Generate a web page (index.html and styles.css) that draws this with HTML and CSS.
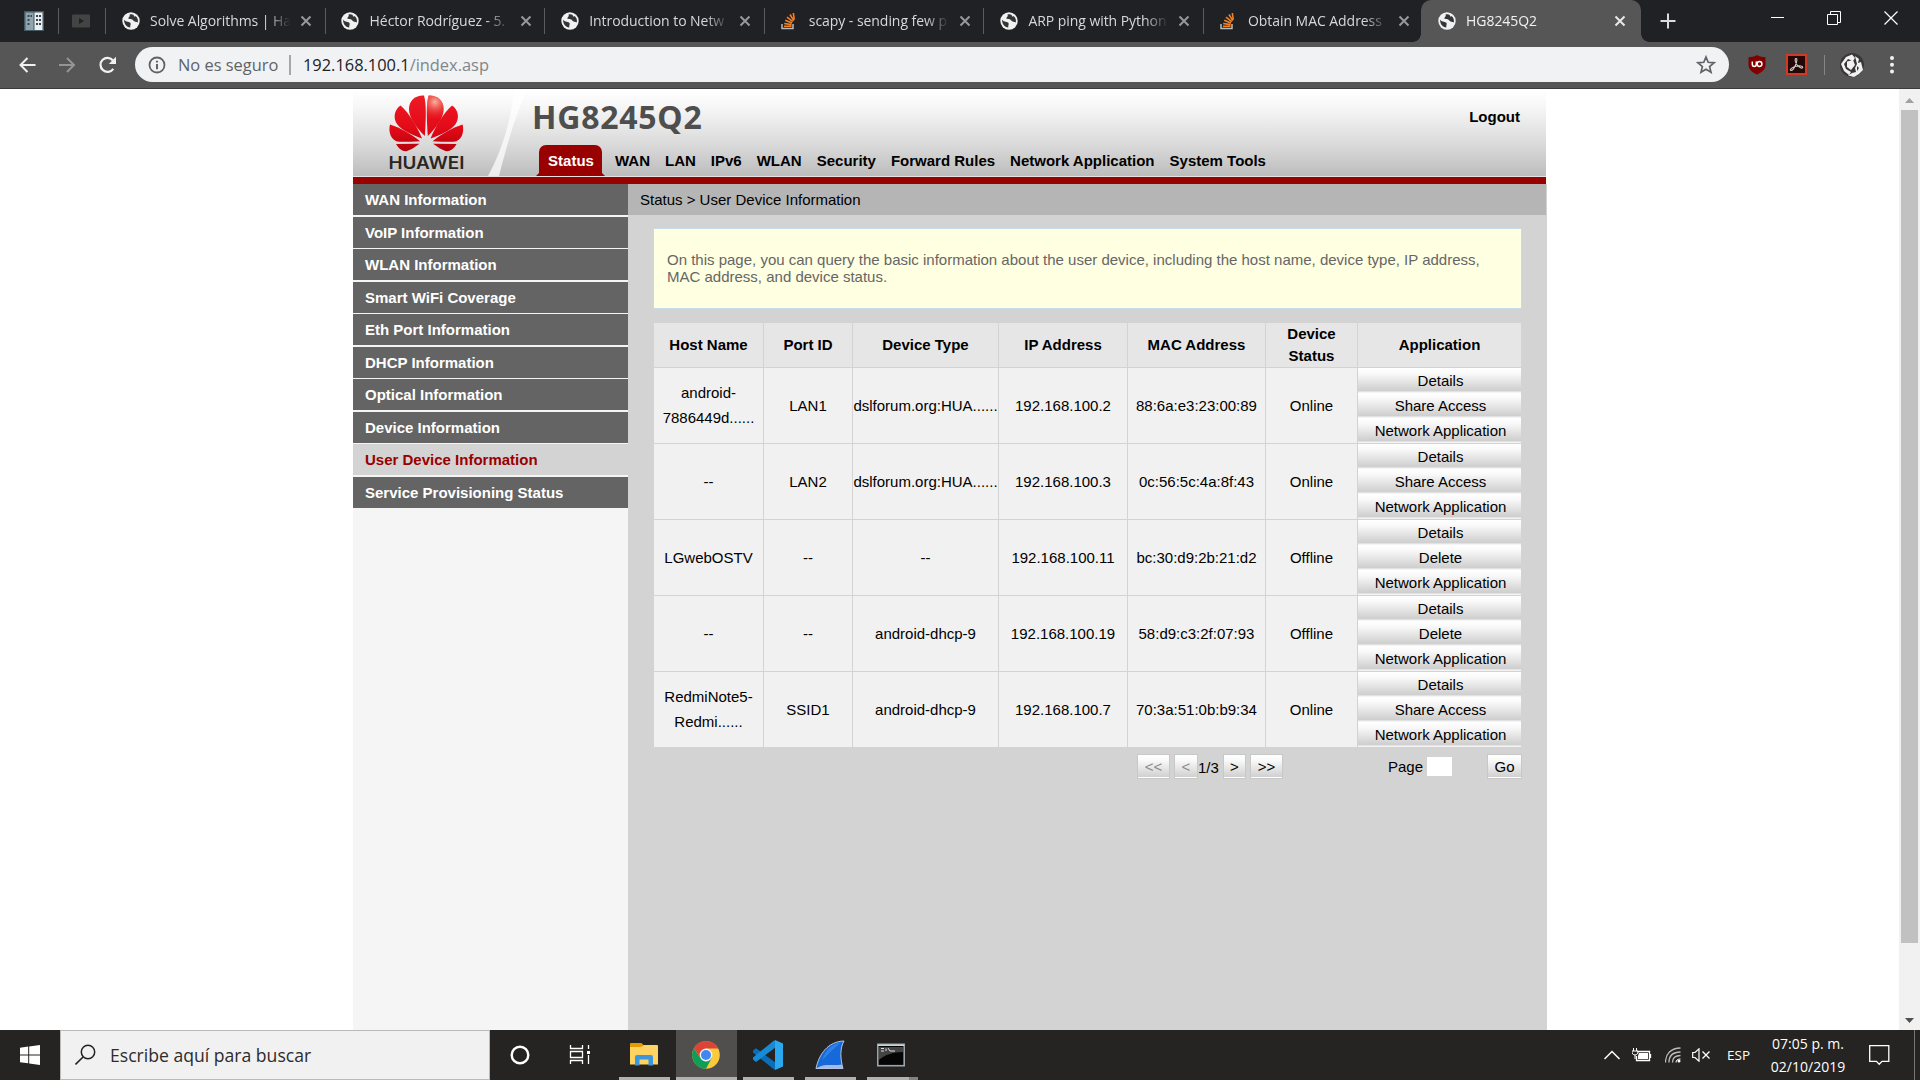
FILE: index.html
```html
<!DOCTYPE html>
<html lang="es">
<head>
<meta charset="utf-8">
<title>HG8245Q2</title>
<link rel="stylesheet" href="styles.css">
</head>
<body>
<svg class="defs" aria-hidden="true">
  <symbol id="globe" viewBox="0 0 18 18"><circle cx="9" cy="9" r="8.700" fill="#f1f1f1"/><path d="M2 7.500C3 10 6.500 9.300 8 10.500C9.500 11.800 8 13 8.300 15.500C4.500 15.200 2 12 2 7.500ZM7.500 2.500C8.500 4 6.800 5 6.300 6.200C6.800 7.600 10.500 6.600 11.300 8.400C12 10 14.500 9.200 15.800 10.400C16.300 8 15.500 5.500 13.500 4C12.500 5.500 11.500 3.800 11.800 2.900C10.500 2.200 9 2.200 7.500 2.500Z" fill="#333538"/></symbol>
  <symbol id="stack" viewBox="0 0 18 18"><path d="M2 12V16.500H13V12" fill="none" stroke="#bcbbbb" stroke-width="1.500"/><path d="M4 14.200H11.500M4.200 11.500L11.600 12.600M5.200 8.300L12 11M7 5.200L12.800 9.600M10 2.500L13.800 8.600M13.300 1L14.300 7.500" stroke="#f48024" stroke-width="1.600"/></symbol>
  <symbol id="x" viewBox="0 0 12 12"><path d="M1.500 1.500L10.500 10.500M10.500 1.500L1.500 10.500" stroke="currentColor" stroke-width="2"/></symbol>
</svg>

<header class="tabs">
  <div class="pin pin--first"><svg width="20" height="20" viewBox="0 0 20 20"><path d="M0 0H20V20H0Z" fill="#455a64"/><path d="M1.500 1.500H9.500V19H1.500Z" fill="#90a4ae"/><path d="M10.500 1.500H18.500V19H10.500Z" fill="#eceff1"/><path d="M3.500 4H5.500V6H3.500ZM6.500 4H8V6H6.500ZM3.500 8H5.500V10H3.500ZM3.500 12H5.500V14H3.500ZM12 4H14V6H12ZM15 4H17V6H15ZM12 8H14V10H12ZM15 8H17V10H15ZM12 12H14V14H12ZM15 12H17V14H15Z" fill="#37474f"/></svg></div>
  <div class="pin pin--second"><svg width="18" height="14" viewBox="0 0 18 14"><rect width="18" height="13" y=".5" rx="1" fill="#444"/><path d="M7 4L12 7L7 10Z" fill="#202124"/></svg></div>
  <div class="tab"><svg class="tab__icon"><use href="#globe"/></svg><span class="tab__title">Solve Algorithms | Ha</span><svg class="tab__close"><use href="#x"/></svg></div>
  <div class="tab"><svg class="tab__icon"><use href="#globe"/></svg><span class="tab__title">Héctor Rodríguez - 5.</span><svg class="tab__close"><use href="#x"/></svg></div>
  <div class="tab"><svg class="tab__icon"><use href="#globe"/></svg><span class="tab__title">Introduction to Netw</span><svg class="tab__close"><use href="#x"/></svg></div>
  <div class="tab"><svg class="tab__icon"><use href="#stack"/></svg><span class="tab__title">scapy - sending few p</span><svg class="tab__close"><use href="#x"/></svg></div>
  <div class="tab"><svg class="tab__icon"><use href="#globe"/></svg><span class="tab__title">ARP ping with Python</span><svg class="tab__close"><use href="#x"/></svg></div>
  <div class="tab tab--last"><svg class="tab__icon"><use href="#stack"/></svg><span class="tab__title">Obtain MAC Address</span><svg class="tab__close"><use href="#x"/></svg></div>
  <div class="tab tab--active"><svg class="tab__icon"><use href="#globe"/></svg><span class="tab__title">HG8245Q2</span><svg class="tab__close"><use href="#x"/></svg></div>
  <svg class="tabs__new" width="16" height="16"><path d="M8 .5V15.500M.5 8H15.500" stroke="#dadce0" stroke-width="2"/></svg>
  <div class="wincontrols">
    <svg width="14" height="14"><path d="M1 6.500H14" stroke="#fff"/></svg>
    <svg width="14" height="14"><path d="M.5 3.500H10.500V13.500H.5ZM3.500 3V.5H13.500V11.500H11" fill="none" stroke="#fff"/></svg>
    <svg width="14" height="14"><path d="M.5 .5L13.500 13.500M13.500 .5L.5 13.500" stroke="#fff" stroke-width="1.200"/></svg>
  </div>
</header>

<div class="toolbar">
  <svg class="toolbar__nav" width="18" height="18"><path d="M17.500 9H3M9.500 2L2.500 9L9.500 16" fill="none" stroke="#f1f1f1" stroke-width="2"/></svg>
  <svg class="toolbar__nav" width="18" height="18"><path d="M1 9H15.500M9 2L16 9L9 16" fill="none" stroke="#959595" stroke-width="2"/></svg>
  <svg class="toolbar__nav" width="19" height="18"><path d="M15.300 12.800A7 7 0 1 1 15 4.500" fill="none" stroke="#f1f1f1" stroke-width="2.200"/><path d="M18 .8V8H10.800Z" fill="#f1f1f1"/></svg>
  <div class="omnibox">
    <svg width="18" height="18"><circle cx="9" cy="9" r="7.500" fill="none" stroke="#5f6368" stroke-width="1.800"/><path d="M9 8V13.200M9 4.800V6.500" stroke="#5f6368" stroke-width="2"/></svg>
    <span class="omnibox__warn">No es seguro</span>
    <span class="omnibox__sep"></span>
    <span class="omnibox__url">192.168.100.1<i>/index.asp</i></span>
    <svg class="omnibox__star" width="20" height="20"><path d="M10 2L12.200 7.300L18 7.800L13.600 11.600L15 17.300L10 14.200L5 17.300L6.400 11.600L2 7.800L7.800 7.300Z" fill="none" stroke="#5f6368" stroke-width="1.700"/></svg>
  </div>
  <svg class="ext-shield" width="18" height="20"><path d="M9 0C12 2 15 2 17.500 2.200V10C17.500 15 13 17.500 9 19.500C5 17.500 .5 15 .5 10V2.200C3 2 6 2 9 0Z" fill="#800000"/><path d="M4.300 6.500V9Q4.300 11.500 6.300 11.500Q8.300 11.500 8.300 9V6.500" fill="none" stroke="#fff" stroke-width="1.500"/><circle cx="11.500" cy="9" r="2.400" fill="none" stroke="#fff" stroke-width="1.500"/></svg>
  <svg class="ext-pdf" width="21" height="21"><rect x="1" y="1" width="19" height="19" fill="#230806" stroke="#d13826" stroke-width="2"/><path d="M9.800 4.500C11.500 4 11 7.500 9.500 11C8.300 14 6 16.800 4.500 16.300C3.500 15.300 7 12.800 10 12.200C13.500 11.500 17 12 16.800 13.600C16 15 12.500 13 10.800 10.500C9.300 8 8.600 5.500 9.800 4.500Z" fill="none" stroke="#ccc" stroke-width="1.100"/></svg>
  <span class="toolbar__sep"></span>
  <svg class="avatar" width="26" height="26"><circle cx="13" cy="13" r="12" fill="#3a3636"/><path d="M2 12L7 5L13 2.500L16 6L14 9L9 7L5 12L7 17L12 20L10 23L5 19ZM8 9.500L14 8L16 13L12 18L8 15ZM16 4L20 7L19 11L22 10L24 18L20 22L15 25L9 23.500L13 21L17 20L16 16L18 12Z" fill="#f1f1f1"/><path d="M18 14L20 16L18 19Z" fill="#3a3636"/></svg>
  <svg class="toolbar__menu" width="6" height="20"><circle cx="3" cy="3" r="2" fill="#f1f1f1"/><circle cx="3" cy="9.800" r="2" fill="#f1f1f1"/><circle cx="3" cy="16.600" r="2" fill="#f1f1f1"/></svg>
</div>

<div class="viewport">
  <div class="site">
    <div class="banner">
      <svg class="banner__brand" width="181" height="87">
        <defs>
          <linearGradient id="petal" x1="0" y1="6" x2="0" y2="62" gradientUnits="userSpaceOnUse"><stop offset="0" stop-color="#ee1c25"/><stop offset=".6" stop-color="#e20a17"/><stop offset="1" stop-color="#b5000b"/></linearGradient>
          <radialGradient id="glow" cx="82" cy="13" r="18" gradientUnits="userSpaceOnUse"><stop offset="0" stop-color="#f6b59c"/><stop offset="1" stop-color="#ee1c25" stop-opacity="0"/></radialGradient>
          <g id="wing"><path d="M71.800 47C73 30 73.500 15 71 6.500C63 6 56 11 56 20C56 29 63 38 71.800 47Z"/><path d="M69 49.500C64 37 56 24 47.500 16.500C41 21 40 29 44 35C49 42 60 46 69 49.500Z"/><path d="M67 52.200C58 45 48 39 37 35.500C35 43 38 52 46 52.800C53 53 60 52.500 67 52.200Z"/><path d="M66.500 54.800L43 55C46 60 50 63 54 62C58 61 62 58 66.500 54.800Z"/></g>
        </defs>
        <path d="M161 0C158 35 147 65 135 87H146C152 65 160 30 175 0Z" fill="#fff" opacity=".72"/>
        <use href="#wing" fill="url(#petal)"/>
        <use href="#wing" fill="url(#petal)" transform="matrix(-1 0 0 1 146.600 0)"/>
        <path d="M74.800 47C73.600 30 73.100 15 75.600 6.500C83.600 6 90.600 11 90.600 20C90.600 29 83.600 38 74.800 47Z" fill="url(#glow)"/>
        <text class="banner__name" x="35.500" y="80" textLength="76" lengthAdjust="spacingAndGlyphs">HUAWEI</text>
      </svg>
      <div class="banner__main">
        <div class="banner__top"><h1>HG8245Q2</h1><a class="banner__logout">Logout</a></div>
        <nav class="menu">
          <a class="menu__item menu__item--on">Status</a><a class="menu__item">WAN</a><a class="menu__item">LAN</a><a class="menu__item">IPv6</a><a class="menu__item">WLAN</a><a class="menu__item">Security</a><a class="menu__item">Forward Rules</a><a class="menu__item">Network Application</a><a class="menu__item">System Tools</a>
        </nav>
      </div>
    </div>
    <div class="columns">
      <aside class="side">
        <a>WAN Information</a><a>VoIP Information</a><a>WLAN Information</a><a>Smart WiFi Coverage</a><a>Eth Port Information</a><a>DHCP Information</a><a>Optical Information</a><a>Device Information</a><a class="side__on">User Device Information</a><a>Service Provisioning Status</a>
      </aside>
      <main class="main">
        <div class="crumbs">Status &gt; User Device Information</div>
        <div class="main__body">
          <p class="note">On this page, you can query the basic information about the user device, including the host name, device type, IP address,<br>MAC address, and device status.</p>
          <table class="devices">
            <colgroup><col class="c1"><col class="c2"><col class="c3"><col class="c4"><col class="c5"><col class="c6"><col class="c7"></colgroup>
            <thead><tr><th>Host Name</th><th>Port ID</th><th>Device Type</th><th>IP Address</th><th>MAC Address</th><th>Device Status</th><th>Application</th></tr></thead>
            <tbody>
            <tr><td class="devices__wrap">android-<br>7886449d......</td><td>LAN1</td><td>dslforum.org:HUA......</td><td>192.168.100.2</td><td>88:6a:e3:23:00:89</td><td>Online</td><td><a class="act">Details</a><a class="act">Share Access</a><a class="act">Network Application</a></td></tr>
            <tr><td>--</td><td>LAN2</td><td>dslforum.org:HUA......</td><td>192.168.100.3</td><td>0c:56:5c:4a:8f:43</td><td>Online</td><td><a class="act">Details</a><a class="act">Share Access</a><a class="act">Network Application</a></td></tr>
            <tr><td>LGwebOSTV</td><td>--</td><td>--</td><td>192.168.100.11</td><td>bc:30:d9:2b:21:d2</td><td>Offline</td><td><a class="act">Details</a><a class="act">Delete</a><a class="act">Network Application</a></td></tr>
            <tr><td>--</td><td>--</td><td>android-dhcp-9</td><td>192.168.100.19</td><td>58:d9:c3:2f:07:93</td><td>Offline</td><td><a class="act">Details</a><a class="act">Delete</a><a class="act">Network Application</a></td></tr>
            <tr><td class="devices__wrap">RedmiNote5-<br>Redmi......</td><td>SSID1</td><td>android-dhcp-9</td><td>192.168.100.7</td><td>70:3a:51:0b:b9:34</td><td>Online</td><td><a class="act">Details</a><a class="act">Share Access</a><a class="act">Network Application</a></td></tr>
            </tbody>
          </table>
          <div class="pager">
            <span class="pager__btn pager__btn--wide pager__btn--off">&lt;&lt;</span><span class="pager__btn pager__btn--off pager__prev">&lt;</span><span class="pager__count">1/3</span><span class="pager__btn pager__next">&gt;</span><span class="pager__btn pager__btn--wide">&gt;&gt;</span>
            <span class="pager__label">Page</span><span class="pager__input"></span><span class="pager__btn pager__go">Go</span>
          </div>
        </div>
      </main>
    </div>
  </div>
  <div class="scroll">
    <svg width="21" height="21"><path d="M6 14L10.500 9L15 14Z" fill="#a0a0a0"/></svg>
    <span class="scroll__thumb"></span>
    <svg class="scroll__down" width="21" height="21"><path d="M6 9L10.500 14L15 9Z" fill="#505050"/></svg>
  </div>
</div>

<footer class="taskbar">
  <div class="start"><svg width="20" height="20"><path d="M0 2.800L8.200 1.600V9.400H0ZM9.200 1.500L20 0V9.400H9.200ZM0 10.400H8.200V18.300L0 17.200ZM9.200 10.400H20V20L9.200 18.500Z" fill="#fff"/></svg></div>
  <div class="search"><svg width="22" height="22"><circle cx="13" cy="8" r="6.700" fill="none" stroke="#222" stroke-width="1.500"/><path d="M8.300 12.800L.5 20.500" stroke="#222" stroke-width="1.600"/></svg><span>Escribe aquí para buscar</span></div>
  <div class="app app--cortana"><svg width="22" height="22"><circle cx="11" cy="11" r="8.300" fill="none" stroke="#fff" stroke-width="2.400"/></svg></div>
  <div class="app app--view"><svg width="22" height="20"><path d="M1.500 0V3.500H13.500V0M1.500 19V15.500H13.500V19M1.500 6.500H13.500V12.500H1.500ZM19.500 0V4M19.500 10V19" fill="none" stroke="#fff" stroke-width="1.300"/><path d="M18 6H21V9H18Z" fill="#fff"/></svg></div>
  <div class="app app--run app--files"><svg width="28" height="26"><path d="M0 2Q0 1 1 1H11.500L14 3.500L12 6H0Z" fill="#e39b00"/><path d="M0 5H11L14 3H27Q28 3 28 4V22.500H0Z" fill="#ffd361"/><path d="M5 23.500V15Q5 13 7 13H21Q23 13 23 15V23.500H18.500V17.500H9.500V23.500Z" fill="#3c96dc"/></svg></div>
  <div class="app app--run app--chrome"><svg width="28" height="28" viewBox="-14 -14 28 28"><circle r="13.800" fill="#fbc93c"/><path d="M0 0L-12 -6.900A13.800 13.800 0 0 1 12 -6.900L12 -6.500H0Z" fill="#db4437"/><path d="M-5.600 3.300L-12 -6.900A13.800 13.800 0 0 0 0 13.800L5.600 3.300L0 0Z" fill="#0f9d58"/><path d="M-12 -6.900L-5.600 3.300L0 -6.500Z" fill="#db4437"/><circle r="6.400" fill="#f1f1f1"/><circle r="5" fill="#4285f4"/></svg></div>
  <div class="app app--run app--code"><svg width="30" height="30"><path d="M0 10.500L3 8.200L23 23V29L21 29.500L0 12.500Z" fill="#0a6fbb"/><path d="M0 19.500L3 22L23 7V1L21 .5L0 17.500Z" fill="#168bd7"/><path d="M22 0L30 3.500V26.500L22 30Z" fill="#2ba8ee"/></svg></div>
  <div class="app app--run app--shark"><svg width="30" height="30"><path d="M1 28.500C4 14 13 1.500 29 1C25 8 25 18 28 28.500Z" fill="#1669d9" stroke="#b7c6da" stroke-width="1"/><path d="M2 28C9 23 17 26 27 24.500L28 28.500Z" fill="#a5b9e6"/><path d="M7 20C11 9 18 4 26 2.500C20 7 15 13 7 20Z" fill="#3080ea"/></svg></div>
  <div class="app app--run app--cmd"><svg width="28" height="24"><rect x=".8" y="1.300" width="26.400" height="21.400" fill="#050505" stroke="#9da5aa" stroke-width="1.600"/><path d="M1 1.500H27V3H1Z" fill="#cbd5da"/><path d="M2 4H26V9C16 9 7 12 2 17Z" fill="#444"/><path d="M4 5.500H7M4 8H7M9 5.500V8M11 5L13 8H18" stroke="#ddd" fill="none"/></svg></div>
  <div class="tray">
    <svg class="tray__up" width="16" height="10"><path d="M.5 9L8 1.500L15.500 9" fill="none" stroke="#fff" stroke-width="1.500"/></svg>
    <svg class="tray__bat" width="20" height="14"><path d="M5 3.500H17.500V12.500H4.500V8M18.500 6V10" fill="none" stroke="#fff" stroke-width="1.300"/><path d="M7 5H16V11H6V8Z" fill="#fff"/><path d="M1.500 0V3M4.500 0V3M0 3H6V5Q5 7 3 7Q1 7 0 5ZM3 7V11" fill="none" stroke="#fff"/></svg>
    <svg class="tray__wifi" width="16" height="16"><path d="M.5 15.500C.5 7 6 1 15.500 1M4 15.500C4 9 8 5 15.500 5M7.500 15.500C7.500 11 10 8.500 15.500 8.500" fill="none" stroke="#bbb" stroke-width="1.300"/><path d="M11 15.500Q11 12 15.500 12" fill="none" stroke="#fff"/><circle cx="14" cy="14" r="1.500" fill="#fff"/></svg>
    <svg class="tray__vol" width="19" height="14"><path d="M.7 4.500H3L7 .8V13.200L3 9.500H.7Z" fill="none" stroke="#fff" stroke-width="1.200"/><path d="M10.500 3.500L17.500 10.500M17.500 3.500L10.500 10.500" stroke="#fff" stroke-width="1.300"/></svg>
    <span class="tray__lang">ESP</span>
    <div class="tray__clock"><span>07:05 p. m.</span><span>02/10/2019</span></div>
    <svg class="tray__note" width="21" height="21"><path d="M.7 .7H19.800V16.300H13L10.200 19.300L7.500 16.300H.7Z" fill="none" stroke="#fff" stroke-width="1.300"/></svg>
    <span class="tray__edge"></span>
  </div>
</footer>
</body>
</html>
```
FILE: styles.css
```css
* { box-sizing: border-box; }
body {
  margin: 0;
  width: 1920px;
  height: 1080px;
  overflow: hidden;
  display: flex;
  flex-direction: column;
  background: #fff;
  font: 15px "Liberation Sans", Arial, sans-serif;
  color: #000;
}
svg { display: block; flex: none; }
.defs { display: none; }

/* Browser tabs */
.tabs, .toolbar, .taskbar { font-family: "Open Sans", "Noto Sans", sans-serif; }
.tabs {
  flex: none;
  display: flex;
  align-items: center;
  height: 42px;
  background: #202124;
  color: #d6d8db;
  font-size: 14px;
}
.pin { height: 26px; display: flex; align-items: center; border-right: 1px solid #5a5c60; }
.pin--first { width: 59px; padding-left: 24px; }
.pin--second { width: 47px; padding-left: 13px; }
.tab {
  flex: none;
  width: 219.6px;
  height: 26px;
  padding-left: 15.500px;
  display: flex;
  align-items: center;
  border-right: 1px solid #5a5c60;
}
.tab__icon { width: 18px; height: 18px; }
.tab__title {
  width: 142px;
  margin: 0 8px 1px 10.500px;
  white-space: nowrap;
  letter-spacing: -.05px;
  -webkit-mask-image: linear-gradient(90deg, #000 82%, transparent 99%);
  mask-image: linear-gradient(90deg, #000 82%, transparent 99%);
}
.tab__close { width: 12px; height: 12px; color: #96989b; }
.tab--last { border-color: transparent; }
.tab--active {
  position: relative;
  height: 42px;
  margin-left: -3px;
  width: 220.400px;
  padding-left: 17px;
  border: 0;
  border-radius: 10px 10px 0 0;
  background: #565656;
  color: #f1f1f1;
}
.tab--active .tab__title { width: 140px; }
.tab--active .tab__close { color: #e8e8e8; }
.tab--active::before, .tab--active::after {
  content: "";
  position: absolute;
  bottom: 0;
  width: 8px;
  height: 8px;
}
.tab--active::before { left: -8px; background: radial-gradient(circle at 0 0, transparent 7.500px, #565656 8px); }
.tab--active::after { right: -8px; background: radial-gradient(circle at 100% 0, transparent 7.500px, #565656 8px); }
.tabs__new { margin-left: 19px; }
.wincontrols { margin: 0 22px 6px auto; display: flex; gap: 43px; }

/* Browser toolbar */
.toolbar {
  flex: none;
  height: 47px;
  padding: 5px 24px 6px 18px;
  display: flex;
  align-items: center;
  background: #565656;
  border-bottom: 1px solid #3b3b3b;
}
.toolbar__nav { margin-right: 22px; }
.toolbar__nav:nth-child(3) { margin-right: 18px; }
.omnibox {
  width: 1594px;
  height: 35px;
  margin-right: 19px;
  padding: 0 13px 0 13px;
  display: flex;
  align-items: center;
  border-radius: 18px;
  background: #f1f2f4;
  font-size: 16.400px;
  white-space: nowrap;
}
.omnibox__warn { width: 112px; padding-left: 12px; color: #5f6368; }
.omnibox__sep { width: 2px; height: 20px; margin: 0 12px 0 11px; background: #a5a7ab; }
.omnibox__warn, .omnibox__url { padding-bottom: 1px; }
.omnibox__url { color: #202124; }
.omnibox__url i { font-style: normal; color: #80868b; }
.omnibox__star { margin-left: auto; }
.ext-shield { margin-right: 20px; }
.ext-pdf { margin-right: 17px; }
.toolbar__sep { width: 1px; height: 20px; margin-right: 14px; background: #858585; }
.avatar { margin-right: 24px; }

/* Page area */
.viewport { flex: none; height: 941px; display: flex; justify-content: space-between; }
.site { width: 1194px; margin-left: 353px; display: flex; flex-direction: column; }
.banner {
  flex: none;
  width: 1193px;
  height: 95px;
  display: flex;
  background: linear-gradient(#fff 0, #f5f5f5 20px, #d8d8d8 58px, #bcbcbc 87px, #e3e3e3 87px, #e3e3e3 88px, #900 88px);
}
.banner__name { font: 600 17px Inter, sans-serif; fill: #2b2524; }
.banner__main { width: 1012px; height: 87px; display: flex; flex-direction: column; justify-content: space-between; }
.banner__top { display: flex; justify-content: space-between; align-items: center; height: 56px; padding: 0 26px 0 0; }
.banner h1 {
  margin: 0 0 0 -2px;
  font: bold 32px/56px "Noto Sans", sans-serif;
  letter-spacing: .75px;
  color: #4e4e4e;
  white-space: nowrap;
}
.banner__logout { font-weight: bold; padding-bottom: 2px; }
.menu { display: flex; align-items: flex-end; padding-left: 5px; font-weight: bold; white-space: nowrap; }
.menu__item { line-height: 31px; margin-right: 15px; }
.menu__item--on {
  position: relative;
  width: 63px;
  margin-right: 13px;
  padding-left: 1px;
  text-align: center;
  color: #fff;
  background: #900;
  border-radius: 7px 7px 0 0;
}
.menu__item--on::after {
  content: "";
  position: absolute;
  left: -3px;
  right: -3px;
  bottom: 0;
  height: 3px;
  background: #900;
  clip-path: polygon(3px 0, calc(100% - 3px) 0, 100% 100%, 0 100%);
}
.columns { flex: 1; display: flex; }
.side {
  width: 275px;
  display: flex;
  flex-direction: column;
  gap: 1.500px;
  background: #f5f5f5;
  color: #fff;
  font-weight: bold;
}
.side a { height: 31px; line-height: 31px; padding-left: 12px; background: #646464; }
.side .side__on { background: #d3d3d3; color: #900; }
.main { width: 919px; background: #d3d3d3; }
.crumbs { width: 918px; height: 31px; line-height: 31px; padding-left: 12px; background: #b5b5b5; }
.main__body { padding: 13px 26px 0; }
.note {
  margin: 0 -1px 14px;
  height: 81px;
  padding: 22px 13px 0;
  line-height: 17px;
  background: #ffffe1;
  border: 1px solid #c5dce6;
  color: #666;
  white-space: nowrap;
}
.devices { width: 867px; table-layout: fixed; border-collapse: separate; border-spacing: 0; text-align: center; }
.c1 { width: 109px; } .c2 { width: 89px; } .c3 { width: 146px; } .c4 { width: 129px; }
.c5 { width: 138px; } .c6 { width: 92px; } .c7 { width: 164px; }
.devices th, .devices td { padding: 0; border-left: 1px solid #d3d3d3; border-bottom: 1px solid #d3d3d3; }
.devices th:first-child, .devices td:first-child { border-left: 0; }
.devices th { height: 45px; line-height: 22px; background: #e6e6e6; }
.devices td { height: 76px; line-height: 25px; background: #f1f1f1; }
.devices .devices__wrap { padding-bottom: 2px; }
.act {
  display: block;
  height: 25px;
  padding-left: 2px;
  line-height: 26px;
  background: linear-gradient(#fff 0, #fafafa 5px, #d0d0d0 22px, #d0d0d0 23px, #f4f4f4 24px);
}
.pager { display: flex; align-items: center; height: 25px; margin: 6px -1px 0 0; padding-left: 483px; }
.pager__btn {
  width: 23px;
  height: 25px;
  border: 1px solid #c8c8c8;
  line-height: 23px;
  text-align: center;
  background: linear-gradient(#fff 0, #fafafa 5px, #d0d0d0 22px, #fff 22px);
}
.pager__btn--wide { width: 33px; }
.pager__btn--off { color: #8a8a8a; }
.pager__prev { margin-left: 4px; width: 24px; }
.pager__count { padding-top: 1px; width: 25px; }
.pager__next { margin-right: 4px; }
.pager__label { margin-left: 105px; }
.pager__input { width: 25px; height: 19px; margin-left: 4px; background: #fff; }
.pager__go { margin-left: auto; width: 35px; }

/* Scrollbar */
.scroll { width: 21px; display: flex; flex-direction: column; align-items: center; background: #f1f1f1; }
.scroll__thumb { width: 17px; height: 833px; background: #c1c1c1; }
.scroll__down { margin-top: auto; }

/* Taskbar */
.taskbar { flex: none; height: 50px; display: flex; background: #252422; color: #fff; }
.start { width: 60px; display: flex; align-items: center; justify-content: center; }
.search {
  width: 430px;
  padding-left: 14px;
  display: flex;
  align-items: center;
  gap: 13px;
  background: #f1f1f1;
  border: 1px solid #b9b9b9;
  color: #2c2c2c;
  font-size: 17.600px;
}
.app { display: flex; align-items: center; justify-content: center; }
.app--cortana { width: 60px; }
.app--view { width: 60px; }
.app--run { width: 51px; border-bottom: 3px solid #b5afb0; padding: 3px 1px 0 0; }
.app--files { margin: 0 6px 0 9px; }
.app--chrome { width: 61px; background: #504f4d; }
.app--code { margin-left: 6px; }
.app--shark { margin-left: 11px; }
.app--cmd { margin-left: 11px; padding-right: 3px; border-image: linear-gradient(90deg, #b5afb0 40px, #858082 40px) 3; border-width: 0 0 3px; border-style: solid; }
.tray { flex: 1; display: flex; align-items: center; padding-left: 686px; font-size: 14px; }
.tray__bat { margin-left: 12px; }
.tray__wifi { margin-left: 13px; }
.tray__vol { margin-left: 11px; }
.tray__lang { margin-left: 16px; width: 24px; font-size: 13.500px; }
.tray__clock { width: 86px; margin-left: 14px; display: flex; flex-direction: column; text-align: center; line-height: 23px; white-space: nowrap; }
.tray__note { margin-left: 18px; }
.tray__edge { width: 1px; height: 50px; margin-left: auto; margin-right: 5px; background: #777; }
```
